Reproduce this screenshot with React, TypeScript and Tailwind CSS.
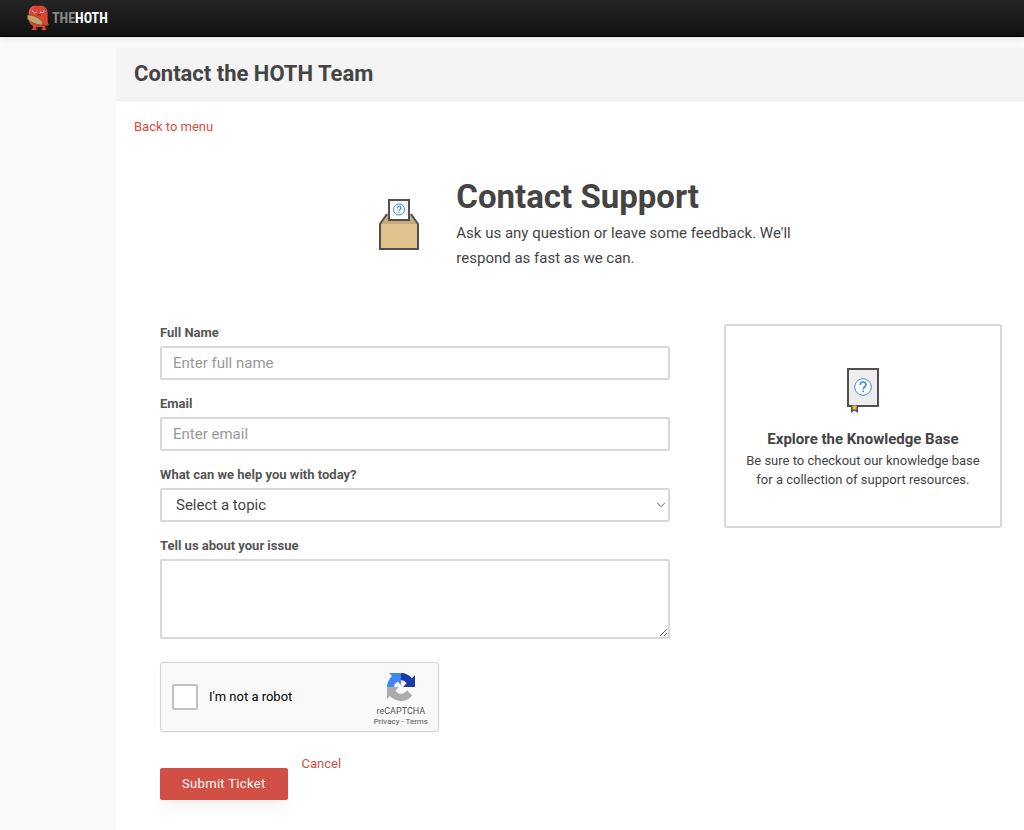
import { ChevronDown } from "lucide-react";
import type { ReactNode } from "react";

function Mascot() {
  return (
    <svg viewBox="0 0 66 78" className="h-[26px] w-[22px]" aria-hidden="true">
      <path
        d="M22 2H46C57 5 62 13 62 25V50L65 60 60 62 55 61V69L60 75H42L46 70V66H27V70L31 75H12L18 70V63C9 58 5 52 5 43V25C5 12 11 4 22 2Z"
        fill="#dc4435"
      />
      <path d="M22 4C11 7 8 14 8 27" fill="none" stroke="#ee6757" strokeWidth="3" />
      <path d="M2 31C16 27 40 39 48 54L46 61C30 60 7 51 2 42Z" fill="#c8a36d" stroke="#7a5a38" strokeWidth="3" />
      <path d="M46 57 54 62M60 62 65 58" stroke="#8e291f" strokeWidth="3" />
      <path d="M17 17Q22 28 29 19" fill="#a92b20" stroke="#fff" strokeWidth="3" />
      <path d="M39 19Q46 28 51 17" fill="#a92b20" stroke="#fff" strokeWidth="3" />
      <path d="M31 31Q36 27 41 31" fill="none" stroke="#8e291f" strokeWidth="3" />
    </svg>
  );
}

function BoxIcon() {
  return (
    <svg viewBox="0 0 40 51" className="h-[51px] w-10 shrink-0" fill="none" aria-hidden="true">
      <path d="M1 25 8 15H32L39 25V50H1Z" fill="#e0c28c" />
      <path d="M2 25 8 15H32L38 25Z" fill="#c6aa79" />
      <path d="M8 15 1 25V50H39V25L32 15" stroke="#505050" strokeWidth="2" />
      <path d="M10 1H30V21H10Z" fill="#fff" stroke="#505050" strokeWidth="2" />
      <circle cx="20" cy="10.500" r="5.500" stroke="#3b8beb" />
      <path d="M18.200 9.300C18.200 6.700 21.900 6.900 21.900 9.100 21.900 10.500 20.100 10.400 20.100 12M20.100 13V14" stroke="#3b8beb" strokeWidth="1.200" />
    </svg>
  );
}

function BookIcon() {
  return (
    <svg viewBox="0 0 32 46" className="h-[46px] w-8" fill="none" aria-hidden="true">
      <path d="M1 1H31V38H1Z" fill="#ededed" stroke="#505050" strokeWidth="2" />
      <path d="M4 37V45L7.500 42.500 11 45V37Z" fill="#505050" />
      <path d="M5.500 37.500H9.500V41.500H5.500Z" fill="#efb64e" />
      <circle cx="16" cy="19" r="8.300" fill="#fff" stroke="#3b8beb" />
      <path d="M13.300 17C13.300 13 18.900 13.200 18.900 16.700 18.900 19 16.200 18.700 16.200 21.500M16.200 22.500V24" stroke="#3b8beb" strokeWidth="1.600" />
    </svg>
  );
}

function RecaptchaLogo() {
  return (
    <svg viewBox="0 0 64 64" className="h-7 w-7" aria-hidden="true">
      <path
        d="M64 31.955l-.033-1.370V4.687l-7.160 7.160C50.948 4.674 42.033.093 32.050.093c-10.400 0-19.622 4.960-25.458 12.640l11.736 11.860a15.550 15.550 0 0 1 4.754-5.334c2.050-1.600 4.952-2.906 8.968-2.906.485 0 .860.057 1.135.163 4.976.393 9.288 3.140 11.828 7.124l-8.307 8.307L64 31.953"
        fill="#1c3aa9"
      />
      <path
        d="M31.862.094l-1.370.033H4.594l7.160 7.160C4.580 13.147 0 22.060 0 32.046c0 10.400 4.960 19.622 12.640 25.458L24.500 45.768a15.550 15.550 0 0 1-5.334-4.754c-1.600-2.050-2.906-4.952-2.906-8.968 0-.485.057-.860.163-1.135.393-4.976 3.140-9.288 7.124-11.828l8.307 8.307L31.860.095"
        fill="#4285f4"
      />
      <path
        d="M.001 32.045l.033 1.370v25.898l7.160-7.160c5.860 7.173 14.774 11.754 24.760 11.754 10.400 0 19.622-4.960 25.458-12.640l-11.736-11.860a15.550 15.550 0 0 1-4.754 5.334c-2.050 1.600-4.952 2.906-8.968 2.906-.485 0-.860-.057-1.135-.163-4.976-.393-9.288-3.140-11.828-7.124l8.307-8.307c-10.522.040-22.400.066-27.295-.005"
        fill="#ababab"
      />
    </svg>
  );
}

const control =
  "block w-full rounded-[2px] border-2 border-[#d8d8d8] bg-white text-[15px] text-[#444] outline-none placeholder:text-[#999] focus:border-gray-400";

function Field({ id, label, children }: { id: string; label: string; children: ReactNode }) {
  return (
    <div>
      <label htmlFor={id} className="mb-[2px] block text-[13px] leading-[22px] font-bold text-[#555]">
        {label}
      </label>
      {children}
    </div>
  );
}

export default function App() {
  return (
    <div className="flex min-h-screen flex-col bg-[#fafafa] font-['Roboto',sans-serif] text-[#444]">
      <header className="flex h-[37px] items-center border-b border-black bg-linear-to-b from-[#242424] to-[#111] pl-[27px] shadow-md shadow-black/5">
        <a href="#" className="flex items-center gap-[3px]">
          <Mascot />
          <span className="font-['Roboto_Condensed','Liberation_Sans_Narrow',Roboto,sans-serif] text-[14px] leading-none font-bold text-white">
            <span className="text-[#888]">THE</span>HOTH
          </span>
        </a>
      </header>

      <main className="mt-[11px] ml-[116px] flex-1 bg-white pb-[29px]">
        <div className="border-b border-[#eee] bg-[#f4f4f4] px-[18px] py-[10px]">
          <h1 className="text-[22px] leading-8 font-bold">Contact the HOTH Team</h1>
        </div>
        <div className="flex px-[18px] pt-4">
          <a href="#" className="text-[13px] leading-5 text-[#d14f45] hover:underline">
            Back to menu
          </a>
        </div>

        {/* Intro */}
        <section className="mt-10 flex items-center gap-[37px] pl-[29%]">
          <BoxIcon />
          <div className="max-w-[340px]">
            <h2 className="text-[33px] leading-10 font-bold">Contact Support</h2>
            <p className="mt-1 text-[15px] leading-[25px]">
              Ask us any question or leave some feedback. We'll respond as fast as we can.
            </p>
          </div>
        </section>

        <div className="mt-[51px] grid grid-cols-[11fr_6fr] items-start gap-[54px] pr-[22px] pl-11">
          <form className="flex flex-col gap-[13px]" onSubmit={(e) => e.preventDefault()}>
            <Field id="name" label="Full Name">
              <input id="name" type="text" placeholder="Enter full name" className={`${control} h-[34px] px-[11px]`} />
            </Field>
            <Field id="email" label="Email">
              <input id="email" type="email" placeholder="Enter email" className={`${control} h-[34px] px-[11px]`} />
            </Field>
            <Field id="topic" label="What can we help you with today?">
              <div className="relative">
                <select id="topic" defaultValue="" className={`${control} h-[34px] appearance-none px-[14px]`}>
                  <option value="">Select a topic</option>
                  <option value="order">Orders</option>
                  <option value="billing">Billing</option>
                </select>
                <ChevronDown strokeWidth={1.5} className="pointer-events-none absolute top-[10px] right-[2px] h-[14px] w-[14px] text-[#444]" />
              </div>
            </Field>
            <Field id="issue" label="Tell us about your issue">
              <textarea id="issue" className={`${control} h-20 resize-y px-[11px] py-2`} />
            </Field>

            {/* Captcha */}
            <div className="mt-[10px] flex h-[70px] w-[279px] items-center justify-between rounded-[3px] border border-[#d3d3d3] bg-[#f9f9f9] pr-[10px] pl-[11px] shadow-xs">
              <label className="flex items-center gap-[11px] text-[13px] text-black">
                <input type="checkbox" className="h-[26px] w-[26px] appearance-none rounded-[2px] border-2 border-[#c1c1c1] bg-white checked:bg-[#4285f4]" />
                I'm not a robot
              </label>
              <div className="flex flex-col items-center pt-[6px] text-[#555]">
                <RecaptchaLogo />
                <span className="mt-1 text-[9px] leading-3">reCAPTCHA</span>
                <span className="text-[8px] leading-[10px]">
                  <a href="#">Privacy</a> - <a href="#">Terms</a>
                </span>
              </div>
            </div>

            <div className="mt-[9px] flex items-start gap-[14px]">
              <button type="submit" className="mt-[14px] h-8 rounded-[2px] bg-[#d14f45] px-[22px] text-[13px] tracking-wide text-white shadow-lg shadow-black/5">
                Submit Ticket
              </button>
              <a href="#" className="text-[13px] leading-5 text-[#d14f45] hover:underline">
                Cancel
              </a>
            </div>
          </form>

          <a href="#" className="mt-[2px] flex flex-col items-center rounded-[3px] border-2 border-[#d8d8d8] px-4 pt-[42px] pb-[37px] text-center">
            <BookIcon />
            <h3 className="mt-[13px] text-[15px] leading-6 font-bold">Explore the Knowledge Base</h3>
            <p className="text-[13px] leading-[19px]">
              Be sure to checkout our knowledge base for a collection of support resources.
            </p>
          </a>
        </div>
      </main>
    </div>
  );
}
